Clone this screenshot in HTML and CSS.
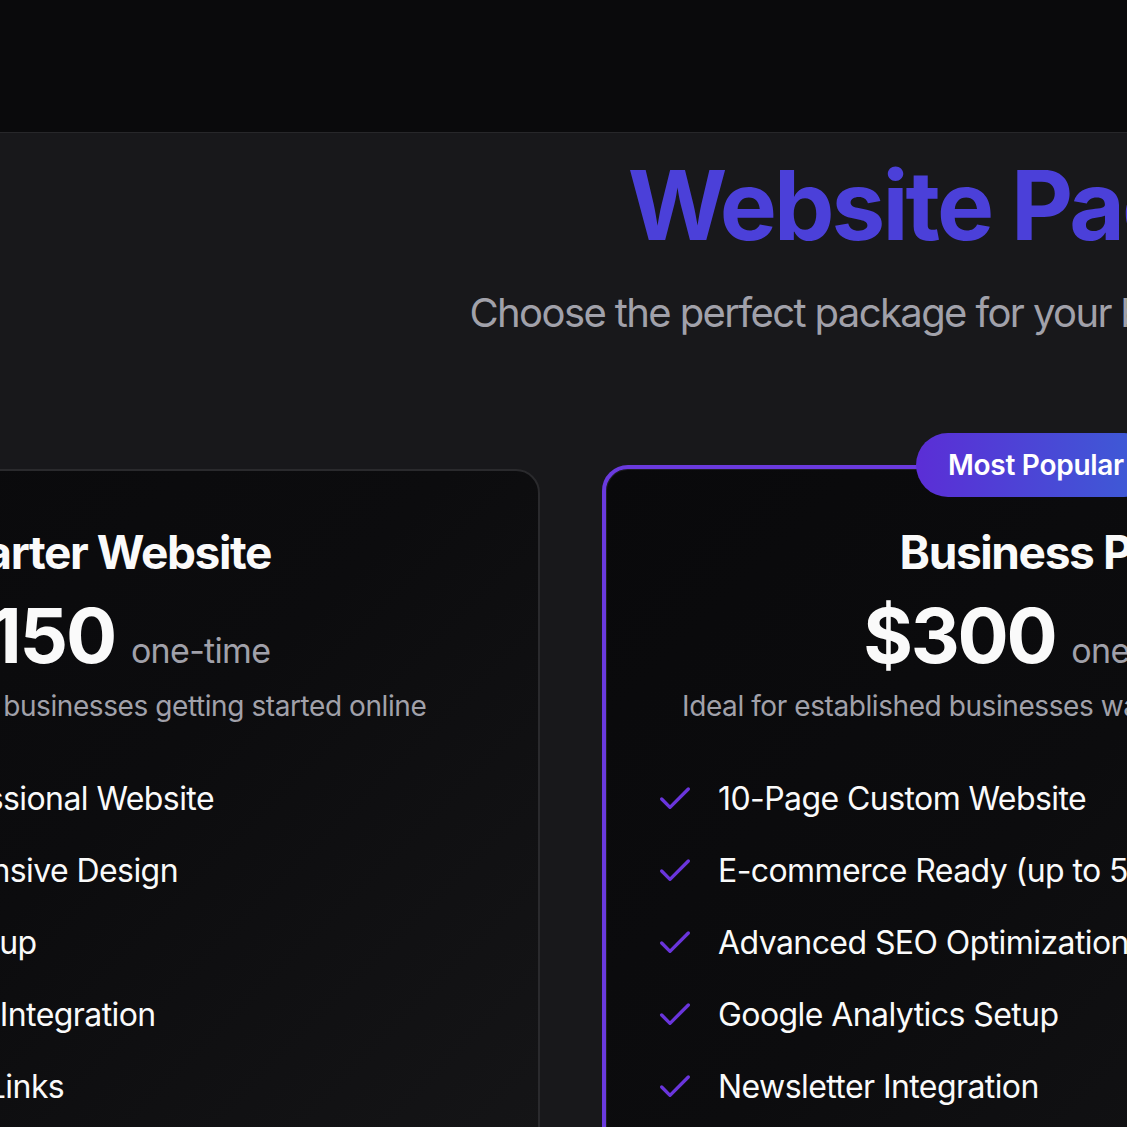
FILE: index.html
```html
<!DOCTYPE html>
<html lang="en">
<head>
<meta charset="utf-8">
<title>Website Packages</title>
<link rel="stylesheet" href="styles.css">
</head>
<body>
<header class="topbar"></header>
<section class="packages">
  <div class="intro">
    <h1 class="title">Website Packages</h1>
    <p class="subtitle">Choose the perfect package for your business needs and budget</p>
  </div>
  <div class="grid">
    <article class="card">
      <h2 class="card-title">Starter Website</h2>
      <div class="price"><span class="amount">$150</span><span class="term">one-time</span></div>
      <p class="desc">Perfect for small businesses getting started online</p>
      <ul class="features">
        <li><svg class="check" viewBox="0 0 24 24"><path d="M20 6 9 17l-5-5"/></svg><span>5-Page Professional Website</span></li>
        <li><svg class="check" viewBox="0 0 24 24"><path d="M20 6 9 17l-5-5"/></svg><span>Mobile Responsive Design</span></li>
        <li><svg class="check" viewBox="0 0 24 24"><path d="M20 6 9 17l-5-5"/></svg><span>Basic SEO Setup</span></li>
        <li><svg class="check" viewBox="0 0 24 24"><path d="M20 6 9 17l-5-5"/></svg><span>Contact Form Integration</span></li>
        <li><svg class="check" viewBox="0 0 24 24"><path d="M20 6 9 17l-5-5"/></svg><span>Social Media Links</span></li>
      </ul>
    </article>
    <article class="card featured">
      <div class="badge">Most Popular</div>
      <h2 class="card-title">Business Pro</h2>
      <div class="price"><span class="amount">$300</span><span class="term">one-time</span></div>
      <p class="desc">Ideal for established businesses wanting to grow online</p>
      <ul class="features">
        <li><svg class="check" viewBox="0 0 24 24"><path d="M20 6 9 17l-5-5"/></svg><span>10-Page Custom Website</span></li>
        <li><svg class="check" viewBox="0 0 24 24"><path d="M20 6 9 17l-5-5"/></svg><span>E-commerce Ready (up to 50 products)</span></li>
        <li><svg class="check" viewBox="0 0 24 24"><path d="M20 6 9 17l-5-5"/></svg><span>Advanced SEO Optimization</span></li>
        <li><svg class="check" viewBox="0 0 24 24"><path d="M20 6 9 17l-5-5"/></svg><span>Google Analytics Setup</span></li>
        <li><svg class="check" viewBox="0 0 24 24"><path d="M20 6 9 17l-5-5"/></svg><span>Newsletter Integration</span></li>
      </ul>
    </article>
    <article class="card">
      <h2 class="card-title">Enterprise</h2>
      <div class="price"><span class="amount">$600</span><span class="term">one-time</span></div>
      <p class="desc">Complete solution for growing companies</p>
      <ul class="features">
        <li><svg class="check" viewBox="0 0 24 24"><path d="M20 6 9 17l-5-5"/></svg><span>Unlimited Pages</span></li>
        <li><svg class="check" viewBox="0 0 24 24"><path d="M20 6 9 17l-5-5"/></svg><span>Full E-commerce Store</span></li>
        <li><svg class="check" viewBox="0 0 24 24"><path d="M20 6 9 17l-5-5"/></svg><span>Premium SEO Package</span></li>
        <li><svg class="check" viewBox="0 0 24 24"><path d="M20 6 9 17l-5-5"/></svg><span>Priority Support</span></li>
        <li><svg class="check" viewBox="0 0 24 24"><path d="M20 6 9 17l-5-5"/></svg><span>Custom Integrations</span></li>
      </ul>
    </article>
  </div>
</section>
</body>
</html>
```
FILE: styles.css
```css
html, body {
  margin: 0;
  padding: 0;
  overflow: hidden;
  height: 100%;
}
body {
  background: #18181b;
  font-family: Inter, "Noto Sans", "DejaVu Sans", sans-serif;
  color: #fafafa;
}
.topbar {
  height: 132px;
  background: #0a0a0c;
  border-bottom: 1px solid #27272a;
}
.packages {
  padding-top: 24px;
  background: #18181b;
}
.intro {
  width: 2072px;
  text-align: center;
}
.title {
  margin: 0;
  font-size: 96px;
  line-height: 1;
  font-weight: 700;
  letter-spacing: -0.03em;
  color: #4b40d9;
}
.subtitle {
  margin: 32px 0 0;
  font-size: 40px;
  line-height: 56px;
  letter-spacing: -0.04em;
  color: #a1a1aa;
  white-space: nowrap;
}
.grid {
  margin: 124px 0 0 -328px;
  display: grid;
  grid-template-columns: repeat(3, 868px);
  column-gap: 62px;
  align-items: start;
}
.card {
  position: relative;
  box-sizing: border-box;
  margin-top: 4px;
  padding: 49px 49px 49px 56px;
  border: 2px solid #2a2a2d;
  border-radius: 24px;
  background: linear-gradient(135deg, #09090b 0%, #0c0c0e 50%, #151517 100%);
  text-align: center;
}
.card .card-title,
.card .price,
.card .desc {
  margin-left: -7px;
}
.card.featured {
  margin-top: 0;
  padding: 51px 47px 47px 49px;
  border: 4px solid #6a3ade;
  border-radius: 26px;
  box-shadow: inset 0 0 0 1px #1f1f23;
}
.card.featured .card-title,
.card.featured .price,
.card.featured .desc {
  margin-left: 0;
}
.badge {
  position: absolute;
  top: -36px;
  left: 50%;
  transform: translateX(-50%);
  height: 64px;
  padding: 0 32px;
  box-sizing: border-box;
  display: flex;
  align-items: center;
  border-radius: 32px;
  background: linear-gradient(90deg, #5b2ed6 0%, #3b5ed6 100%);
  color: #ffffff;
  font-size: 28px;
  font-weight: 600;
  letter-spacing: -0.01em;
  white-space: nowrap;
}
.card-title {
  margin: 0;
  font-size: 46px;
  line-height: 64px;
  font-weight: 700;
  letter-spacing: -0.03em;
  color: #fafafa;
}
.price {
  margin-top: 13px;
  display: flex;
  justify-content: center;
  align-items: baseline;
  gap: 16px;
}
.amount {
  font-size: 76px;
  line-height: 1;
  font-weight: 700;
  letter-spacing: -0.03em;
  color: #fafafa;
}
.term {
  font-size: 34px;
  line-height: 1;
  letter-spacing: -0.02em;
  color: #a1a1aa;
}
.desc {
  margin: 13px 0 0;
  font-size: 28px;
  line-height: 40px;
  letter-spacing: -0.015em;
  color: #a1a1aa;
  white-space: nowrap;
}
.features {
  list-style: none;
  margin: 49px 0 0;
  padding: 0;
  display: flex;
  flex-direction: column;
  gap: 24px;
  text-align: left;
}
.features li {
  display: flex;
  align-items: center;
  gap: 23px;
  font-size: 32px;
  line-height: 48px;
  letter-spacing: -0.018em;
  color: #fafafa;
  white-space: nowrap;
}
.check {
  flex: none;
  width: 40px;
  height: 40px;
  fill: none;
  stroke: #6a35dc;
  stroke-width: 2;
  stroke-linecap: round;
  stroke-linejoin: round;
}
```
